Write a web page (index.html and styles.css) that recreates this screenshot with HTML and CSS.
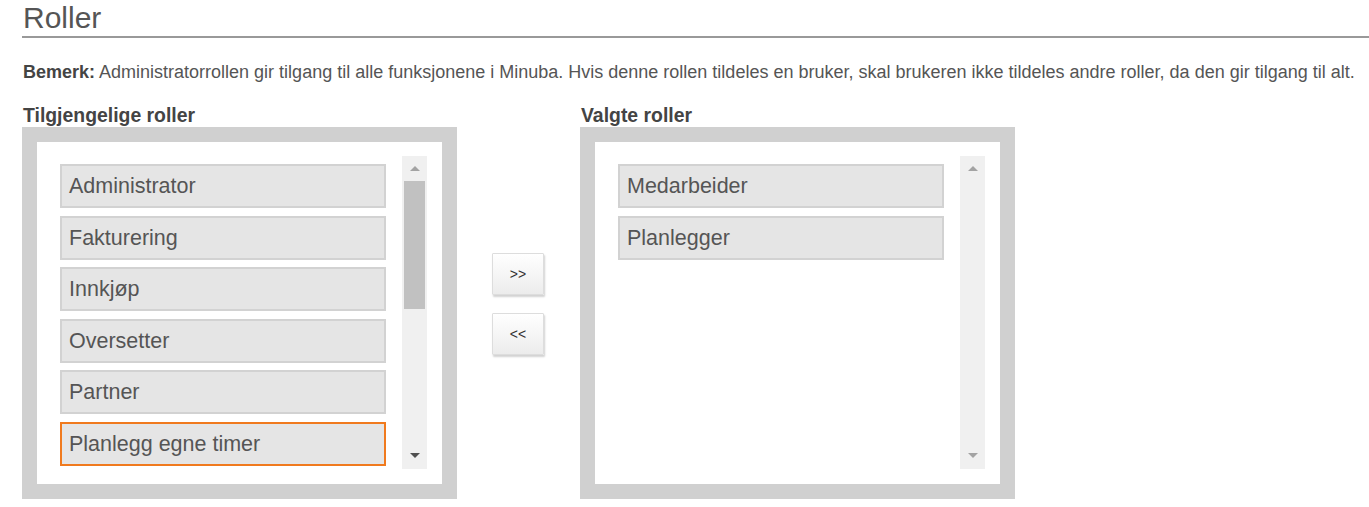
FILE: index.html
```html
<!DOCTYPE html>
<html lang="no">
<head>
  <meta charset="UTF-8">
  <title>Roller</title>
  <meta name="viewport" content="width=device-width, initial-scale=1.0">
  <link rel="stylesheet" href="styles.css">
</head>
<body>
  <div class="page">
    <h1 class="title">Roller</h1>
    <p class="note"><strong>Bemerk:</strong> Administratorrollen gir tilgang til alle funksjonene i Minuba. Hvis denne rollen tildeles en bruker, skal brukeren ikke tildeles andre roller, da den gir tilgang til alt.</p>

    <div class="picker">
      <div class="col">
        <div class="col-label">Tilgjengelige roller</div>
        <div class="box">
          <div class="box-inner">
            <ul class="role-list">
              <li class="role">Administrator</li>
              <li class="role">Fakturering</li>
              <li class="role">Innkjøp</li>
              <li class="role">Oversetter</li>
              <li class="role">Partner</li>
              <li class="role selected">Planlegg egne timer</li>
            </ul>
            <div class="scrollbar">
              <span class="arrow up"></span>
              <div class="track"><span class="thumb"></span></div>
              <span class="arrow down active"></span>
            </div>
          </div>
        </div>
      </div>

      <div class="moves">
        <button class="move-btn">&gt;&gt;</button>
        <button class="move-btn">&lt;&lt;</button>
      </div>

      <div class="col">
        <div class="col-label">Valgte roller</div>
        <div class="box">
          <div class="box-inner">
            <ul class="role-list">
              <li class="role">Medarbeider</li>
              <li class="role">Planlegger</li>
            </ul>
            <div class="scrollbar">
              <span class="arrow up"></span>
              <div class="track"></div>
              <span class="arrow down"></span>
            </div>
          </div>
        </div>
      </div>
    </div>
  </div>
</body>
</html>
```

FILE: styles.css
```css
* {
  box-sizing: border-box;
  font-family: "Liberation Sans", Arial, sans-serif;
}
body {
  margin: 0;
  background: #fff;
  color: #555;
}
.page {
  padding-left: 22px;
}
.title {
  margin: 0;
  padding: 1px 0 1px 1px;
  font-size: 30px;
  line-height: 34px;
  font-weight: normal;
  color: #555;
  border-bottom: 2px solid #999;
}
.note {
  margin: 23px 0 0 1px;
  font-size: 18px;
  line-height: 22px;
  color: #555;
}
.note strong {
  color: #444;
}
.picker {
  display: flex;
  align-items: flex-start;
}
.col-label {
  margin: 21px 0 0 1px;
  font-size: 19.4px;
  line-height: 23px;
  font-weight: bold;
  color: #444;
}
.box {
  width: 435px;
  border: 15px solid #d0d0d0;
  background: #fff;
}
.box-inner {
  display: flex;
  padding: 14px 15px 15px 14px;
}
.role-list {
  flex: 1;
  list-style: none;
  margin: 0;
  padding: 8px 16px 0 9px;
  height: 313px;
  overflow: hidden;
}
.role {
  height: 44px;
  margin-bottom: 7.6px;
  padding: 0 7px;
  background: #e5e5e5;
  border: 2px solid #d2d2d2;
  font-size: 21.5px;
  line-height: 40px;
  color: #555;
  white-space: nowrap;
}
.role.selected {
  border-color: #f07a1e;
}
.scrollbar {
  width: 25px;
  height: 313px;
  background: #f0f0f0;
  display: flex;
  flex-direction: column;
  align-items: center;
}
.arrow {
  width: 0;
  height: 0;
  border-left: 5px solid transparent;
  border-right: 5px solid transparent;
}
.arrow.up {
  margin-top: 10px;
  border-bottom: 5px solid #a3a3a3;
}
.arrow.down {
  margin-bottom: 11px;
  border-top: 5px solid #a3a3a3;
}
.arrow.down.active {
  border-top-color: #505050;
}
.track {
  flex: 1;
  width: 100%;
  padding: 10px 2px 0;
}
.thumb {
  display: block;
  height: 128px;
  background: #c1c1c1;
}
.moves {
  display: flex;
  flex-direction: column;
  gap: 18px;
  margin: 170px 36px 0 35px;
}
.move-btn {
  width: 52px;
  height: 42px;
  padding: 0;
  font-size: 14px;
  color: #333;
  background: linear-gradient(#fff, #ececec);
  border: 1px solid #ddd;
  border-radius: 1px;
  box-shadow: 1px 2px 2px rgba(0,0,0,0.18);
  cursor: pointer;
}
.move-btn:hover {
  background: #e6e6e6;
}
```
